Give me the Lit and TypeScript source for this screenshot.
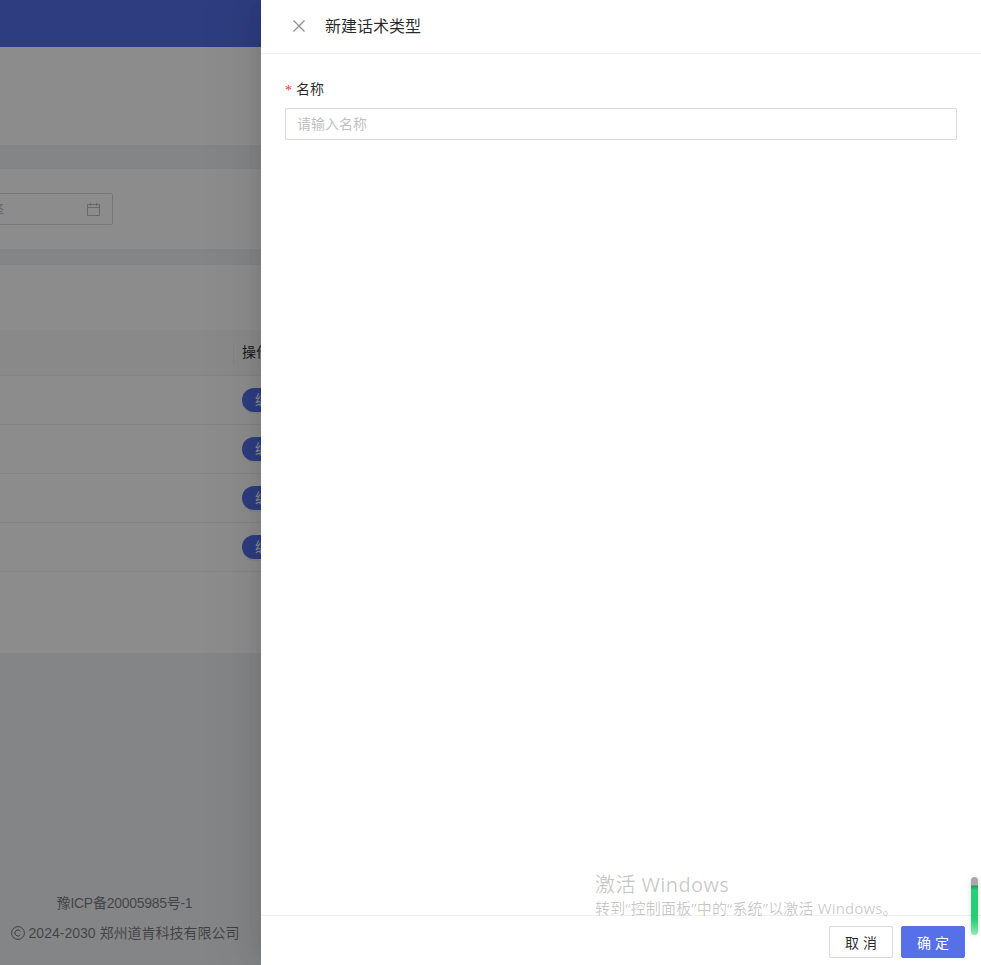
import { LitElement, html, css } from "lit";
import { customElement } from "lit/decorators.js";

@customElement("app-root")
export class AppRoot extends LitElement {
  static styles = css`
    :host { display: block; position: relative; width: 981px; height: 965px; overflow: hidden; background: #f0f2f5; font-family: "Liberation Sans", "Noto Sans CJK SC", sans-serif; font-size: 14px; color: rgba(0,0,0,.85); }
    .page { display: flex; flex-direction: column; height: 965px; }
    .top { height: 47px; flex: none; background: #5570e8; }
    .white1 { height: 98px; flex: none; background: #fff; }
    .gap1 { height: 24px; flex: none; }
    .search { height: 80px; flex: none; background: #fff; display: flex; justify-content: flex-start; padding-top: 24px; box-sizing: border-box; }
    .date { width: 113px; height: 32px; box-sizing: border-box; border: 1px solid #d9d9d9; border-left: none; border-radius: 0 2px 2px 0; display: flex; align-items: center; justify-content: space-between; padding-right: 12px; color: #bfbfbf; overflow: hidden; }
    .date span { margin-left: -10px; }
    .date svg { width: 13px; height: 13px; display: block; margin-top: 1px; }
    .gap2 { height: 16px; flex: none; }
    .card { height: 388px; flex: none; background: #fff; padding-top: 65px; box-sizing: border-box; }
    .thead { height: 46px; box-sizing: border-box; background: #fafafa; border-bottom: 1px solid #f0f0f0; display: flex; align-items: center; padding-left: 162px; }
    .sep0 { width: 1px; height: 45px; background: #f6f6f6; margin-right: 70px; }
    .sep { width: 1px; height: 22px; background: #f0f0f0; margin-right: 8px; }
    .thead span { margin-top: -3px; }
    .row { height: 49px; box-sizing: border-box; border-bottom: 1px solid #f0f0f0; display: flex; align-items: center; padding-left: 242px; }
    .pill { width: 60px; height: 24px; flex: none; background: #5570e8; color: #fff; border-radius: 12px; font-size: 14px; line-height: 24px; padding-left: 13px; box-sizing: border-box; box-shadow: 0 2px 0 rgba(0,0,0,.045); }
    .foot { flex: 1; display: flex; flex-direction: column; align-items: center; width: 250px; padding-top: 239px; box-sizing: border-box; color: rgba(0,0,0,.5); }
    .foot div { height: 30px; white-space: nowrap; display: flex; gap: 4px; align-items: flex-start; }
    .foot .icp { letter-spacing: -.28px; margin-right: 1px; }
    .foot svg { width: 14px; height: 14px; margin-top: 2px; }
    .foot .copy { line-height: 18px; margin-top: 2px; }
    .mask { position: absolute; inset: 0; background: rgba(0,0,0,.45); }
    .drawer { position: absolute; top: 0; right: 0; bottom: 0; width: 720px; background: #fff; display: flex; flex-direction: column; box-shadow: -6px 0 16px -8px rgba(0,0,0,.08), -9px 0 28px 0 rgba(0,0,0,.05), -12px 0 48px 16px rgba(0,0,0,.03); }
    .dh { height: 54px; flex: none; box-sizing: border-box; border-bottom: 1px solid #f0f0f0; display: flex; align-items: center; padding-left: 32px; gap: 20px; }
    .dh svg { width: 12px; height: 12px; display: block; margin-top: -1px; }
    .dh .title { font-size: 16px; line-height: 22px; }
    .db { flex: 1; padding: 24px 24px 0; }
    .label { height: 22px; line-height: 22px; display: flex; margin-bottom: 8px; }
    .req { color: #ff2d30; width: 11px; font-family: "Liberation Serif", serif; font-size: 14px; line-height: 26px; }
    .input { height: 32px; box-sizing: border-box; border: 1px solid #d9d9d9; border-radius: 2px; padding-left: 11px; line-height: 30px; color: #bfbfbf; }
    .df { height: 50px; flex: none; box-sizing: border-box; border-top: 1px solid #f0f0f0; display: flex; justify-content: flex-end; gap: 8px; padding: 10px 16px 0; }
    .btn { width: 64px; height: 32px; box-sizing: border-box; border-radius: 2px; border: 1px solid #d9d9d9; background: #fff; display: flex; align-items: center; justify-content: center; letter-spacing: 4px; text-indent: 4px; }
    .btn.primary { background: #5570e8; border-color: #5570e8; color: #fff; }
    .wm { position: absolute; left: 595px; top: 871px; color: rgba(0,0,0,.22); font-family: "Open Sans", "Noto Sans CJK SC", sans-serif; pointer-events: none; }
    .wm .a { font-size: 20px; line-height: 27px; letter-spacing: .4px; }
    .wm .b { font-size: 15px; line-height: 20px; white-space: nowrap; letter-spacing: .16px; }
    .sb { position: absolute; left: 971px; top: 877px; width: 7px; height: 58px; border-radius: 4px; background: linear-gradient(#a8a8a8 0 8px, #1f9e5c 9px, #25cf76 13px, #25cf76 42px, #8fe8b0 58px); box-shadow: 0 0 6px rgba(0,0,0,.12); }
  `;

  render() {
    const cal = html`<svg viewBox="0 0 13 13" fill="none" stroke="#bfbfbf" stroke-width="1"><path d="M.5 1.5h12v11H.5zM.5 4.5h12M3.5 0v3M9.5 0v3"/></svg>`;
    return html`
      <div class="page">
        <div class="top"></div>
        <div class="white1"></div>
        <div class="gap1"></div>
        <div class="search"><div class="date"><span>择</span>${cal}</div></div>
        <div class="gap2"></div>
        <div class="card">
          <div class="thead"><i class="sep0"></i><i class="sep"></i><span>操作</span></div>
          ${[0, 1, 2, 3].map(() => html`<div class="row"><div class="pill">编辑</div></div>`)}
        </div>
        <div class="foot">
          <div class="icp">豫ICP备20005985号-1</div>
          <div class="copy"><svg viewBox="0 0 14 14" fill="none" stroke="#000" stroke-opacity=".5"><circle cx="7" cy="7" r="6.4"/><path d="M9.3 5.2a3 3 0 1 0 0 3.6"/></svg>2024-2030 郑州道肯科技有限公司</div>
        </div>
      </div>
      <div class="mask"></div>
      <div class="drawer">
        <div class="dh">
          <svg viewBox="0 0 12 12" fill="none" stroke="#000" stroke-opacity=".45" stroke-width="1.2"><path d="M.5.5l11 11M11.5.5l-11 11"/></svg>
          <div class="title">新建话术类型</div>
        </div>
        <div class="db">
          <div class="label"><span class="req">*</span>名称</div>
          <div class="input">请输入名称</div>
        </div>
        <div class="df">
          <div class="btn">取消</div>
          <div class="btn primary">确定</div>
        </div>
      </div>
      <div class="wm"><div class="a">激活 Windows</div><div class="b">转到“控制面板”中的“系统”以激活 Windows。</div></div>
      <div class="sb"></div>
    `;
  }
}
